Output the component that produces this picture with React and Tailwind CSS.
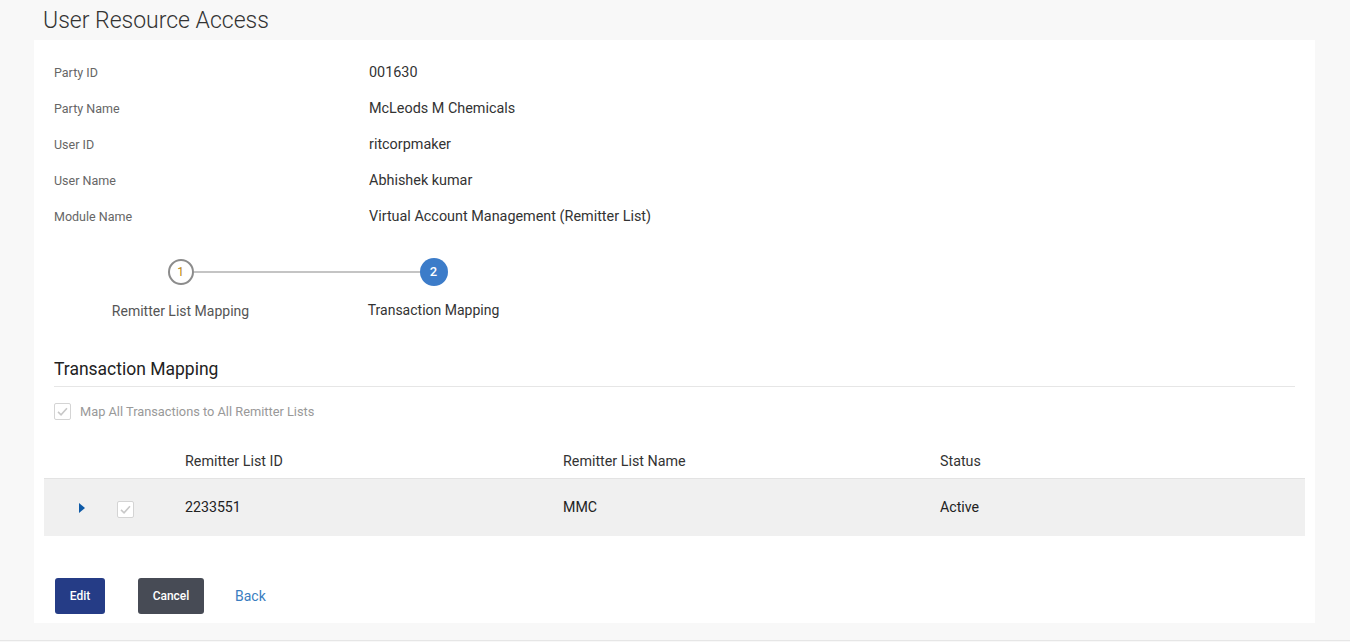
import React from 'react';

const details = [
  ['Party ID', '001630'],
  ['Party Name', 'McLeods M Chemicals'],
  ['User ID', 'ritcorpmaker'],
  ['User Name', 'Abhishek kumar'],
  ['Module Name', 'Virtual Account Management (Remitter List)'],
];

function Tick({ className }) {
  return (
    <svg viewBox="0 0 16 16" className={className} fill="none" stroke="#c8c8c8" strokeWidth="2">
      <path d="M2.5 8.5 L6.2 12 L13.5 4" />
    </svg>
  );
}

function Checkbox() {
  return (
    <span className="flex h-[17px] w-[17px] items-center justify-center rounded-[2px] border border-[#d4d4d4] bg-white">
      <Tick className="h-[13px] w-[13px]" />
    </span>
  );
}

export default function App() {
  return (
    <div className="min-h-screen bg-[#f8f8f8] font-['Roboto','Liberation_Sans',sans-serif]">
      <div className="h-[40px] pl-[43px] pt-[7px]">
        <h1 className="text-[23px] font-light leading-[28px] text-[#333]">User Resource Access</h1>
      </div>

      <div className="ml-[34px] mr-[35px] bg-white px-[10px] pb-[9px] pt-[15px]">
        {/* Details */}
        <div className="px-[10px]">
          {details.map(([label, value]) => (
            <div key={label} className="flex h-[36px] items-center">
              <span className="w-[315px] text-[12.5px] text-[#666]">{label}</span>
              <span className="text-[14.4px] text-[#333]">{value}</span>
            </div>
          ))}
        </div>

        {/* Stepper */}
        <div className="mt-[24px] grid w-[526px] grid-cols-2 px-[10px]">
          <div className="flex flex-col items-center">
            <div className="flex w-full items-center">
              <div className="flex-1" />
              <div className="flex h-[26px] w-[26px] items-center justify-center rounded-full border-2 border-[#8c8c8c] bg-white text-[12px] text-[#b8860b]">1</div>
              <div className="h-[2px] flex-1 bg-[#c4c4c4]" />
            </div>
            <span className="mt-[16px] text-[14px] text-[#555]">Remitter List Mapping</span>
          </div>
          <div className="flex flex-col items-center">
            <div className="-mt-[1px] flex w-full items-center">
              <div className="h-[2px] flex-1 bg-[#c4c4c4]" />
              <div className="flex h-[28px] w-[28px] items-center justify-center rounded-full bg-[#3c7cc9] text-[13px] font-medium text-white">2</div>
              <div className="flex-1" />
            </div>
            <span className="mt-[14px] text-[14px] text-[#333]">Transaction Mapping</span>
          </div>
        </div>

        {/* Section heading */}
        <div className="mx-[10px] mt-[35px] border-b border-[#e6e6e6] pb-[5px]">
          <h2 className="text-[17.5px] leading-[24px] text-[#222]">Transaction Mapping</h2>
        </div>

        <label className="mt-[15px] flex items-center gap-[9px] px-[10px]">
          <Checkbox />
          <span className="text-[12.8px] text-[#999]">Map All Transactions to All Remitter Lists</span>
        </label>

        {/* Table */}
        <div className="mt-[25px]">
          <div className="flex h-[33px] items-center border-b border-[#e3e3e3] text-[14.3px] text-[#333]">
            <div className="w-[141px]" />
            <div className="w-[378px]">Remitter List ID</div>
            <div className="w-[377px]">Remitter List Name</div>
            <div>Status</div>
          </div>
          <div className="flex h-[57px] items-center bg-[#f0f0f0] text-[14.2px] text-[#222]">
            <div className="flex w-[141px] items-center">
              <svg viewBox="0 0 6 10" className="ml-[35px] h-[10px] w-[6px]">
                <path d="M0 0 L6 5 L0 10 Z" fill="#0e5aa7" />
              </svg>
              <span className="ml-[32px] mt-[3px]">
                <Checkbox />
              </span>
            </div>
            <div className="w-[378px]">2233551</div>
            <div className="w-[377px]">MMC</div>
            <div>Active</div>
          </div>
        </div>

        {/* Actions */}
        <div className="mt-[42px] flex items-center px-[11px]">
          <button className="h-[36px] w-[50px] rounded-[3px] bg-[#253c86] text-[12px] font-medium text-white">Edit</button>
          <button className="ml-[33px] h-[36px] w-[66px] rounded-[3px] bg-[#474b55] text-[12px] font-medium text-white">Cancel</button>
          <button className="ml-[31px] text-[14px] text-[#3a7dc0]">Back</button>
        </div>
      </div>

      <div className="mt-[17px] border-t border-[#e6e6e6]" />
    </div>
  );
}
